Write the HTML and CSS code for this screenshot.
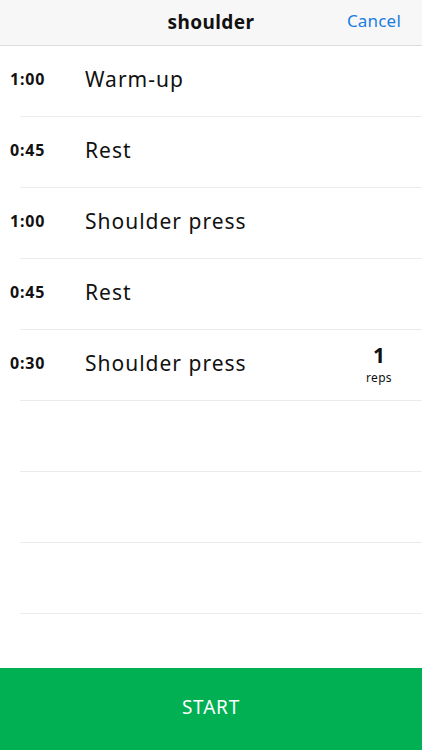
FILE: index.html
```html
<!DOCTYPE html>
<html lang="en">
<head>
    <meta charset="UTF-8">
    <meta name="viewport" content="width=device-width, initial-scale=1.0">
    <title>shoulder</title>
    <link rel="stylesheet" href="styles.css">
</head>
<body>
    <div class="app">
        <header class="topbar">
            <h1 class="title">shoulder</h1>
            <a class="cancel" href="#">Cancel</a>
        </header>

        <ul class="steps">
            <li class="step">
                <span class="time">1:00</span>
                <span class="name">Warm-up</span>
            </li>
            <li class="step">
                <span class="time">0:45</span>
                <span class="name">Rest</span>
            </li>
            <li class="step">
                <span class="time">1:00</span>
                <span class="name">Shoulder press</span>
            </li>
            <li class="step">
                <span class="time">0:45</span>
                <span class="name">Rest</span>
            </li>
            <li class="step">
                <span class="time">0:30</span>
                <span class="name">Shoulder press</span>
                <span class="reps">
                    <span class="reps-count">1</span>
                    <span class="reps-label">reps</span>
                </span>
            </li>
            <li class="step"></li>
            <li class="step"></li>
            <li class="step"></li>
        </ul>

        <button class="start">START</button>
    </div>
</body>
</html>
```

FILE: styles.css
```css
body {
    margin: 0;
    padding: 0;
    font-family: "Noto Sans", "Lato", sans-serif;
    background: #fff;
    color: #111;
}

.app {
    height: 750px;
    display: flex;
    flex-direction: column;
}

.topbar {
    height: 45px;
    background: #f7f7f7;
    border-bottom: 1px solid #dcdcdc;
    display: flex;
    align-items: center;
    justify-content: center;
    position: relative;
}

.title {
    margin: 0 0 2px;
    font-size: 19px;
    font-weight: bold;
    letter-spacing: 0.4px;
    color: #111;
}

.cancel {
    position: absolute;
    right: 21px;
    top: 9px;
    font-size: 17px;
    letter-spacing: 0.2px;
    color: #1a7de0;
    text-decoration: none;
}

.steps {
    list-style: none;
    margin: 0;
    padding: 0;
    flex: 1;
}

.step {
    height: 70px;
    margin-left: 20px;
    border-bottom: 1px solid #ebebeb;
    display: flex;
    align-items: center;
}

.time {
    width: 75px;
    margin-left: -10px;
    margin-top: -5px;
    font-size: 16px;
    font-weight: bold;
    letter-spacing: 0.8px;
}

.name {
    flex: 1;
    font-size: 21px;
    letter-spacing: 1px;
    margin-top: -5px;
}

.reps {
    width: 44px;
    margin-right: 21px;
    display: flex;
    flex-direction: column;
    align-items: center;
    margin-top: 1px;
}

.reps-count {
    font-size: 21px;
    font-weight: bold;
    line-height: 24px;
}

.reps-label {
    font-size: 12px;
    line-height: 22px;
    letter-spacing: 0.3px;
}

.start {
    height: 82px;
    border: none;
    background: #00b052;
    color: #fff;
    font-family: inherit;
    font-size: 19px;
    letter-spacing: 0.8px;
    padding: 0 0 4px;
}
```
